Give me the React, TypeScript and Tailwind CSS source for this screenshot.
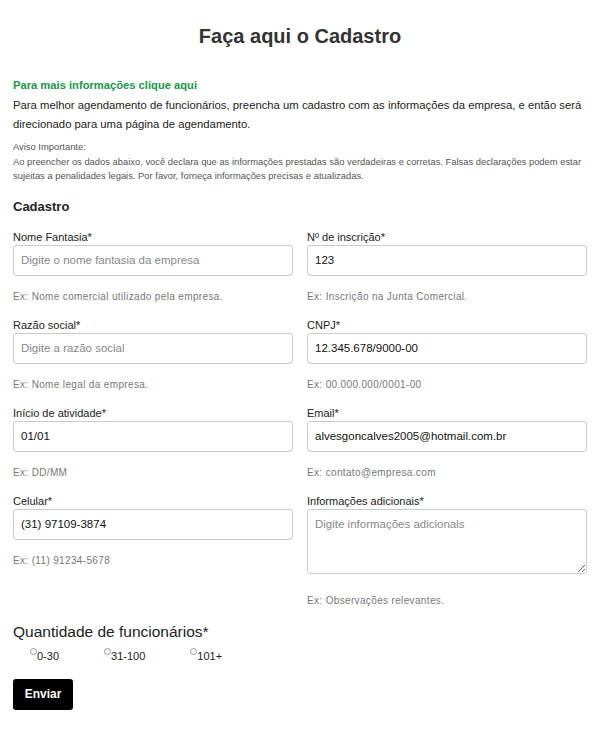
import React, { useState } from 'react';

type Field = {
  id: string;
  label: string;
  placeholder?: string;
  value?: string;
  hint: string;
  multiline?: boolean;
};

const fields: Field[] = [
  { id: 'fantasia', label: 'Nome Fantasia*', placeholder: 'Digite o nome fantasia da empresa', hint: 'Ex: Nome comercial utilizado pela empresa.' },
  { id: 'inscricao', label: 'Nº de inscrição*', value: '123', hint: 'Ex: Inscrição na Junta Comercial.' },
  { id: 'razao', label: 'Razão social*', placeholder: 'Digite a razão social', hint: 'Ex: Nome legal da empresa.' },
  { id: 'cnpj', label: 'CNPJ*', value: '12.345.678/9000-00', hint: 'Ex: 00.000.000/0001-00' },
  { id: 'inicio', label: 'Início de atividade*', value: '01/01', hint: 'Ex: DD/MM' },
  { id: 'email', label: 'Email*', value: 'alvesgoncalves2005@hotmail.com.br', hint: 'Ex: contato@empresa.com' },
  { id: 'celular', label: 'Celular*', value: '(31) 97109-3874', hint: 'Ex: (11) 91234-5678' },
  { id: 'info', label: 'Informações adicionais*', placeholder: 'Digite informações adicionais', hint: 'Ex: Observações relevantes.', multiline: true },
];

const quantidades = ['0-30', '31-100', '101+'];

const App: React.FC = () => {
  const [values, setValues] = useState<Record<string, string>>(() => {
    const init: Record<string, string> = {};
    fields.forEach((f) => (init[f.id] = f.value ?? ''));
    return init;
  });
  const [quantidade, setQuantidade] = useState('');

  const inputClass =
    'block w-full border border-[#cccccc] rounded-[3px] px-[7px] text-[11.5px] text-[#111] placeholder-[#888] bg-white focus:outline-none';

  return (
    <div className="min-h-screen bg-white font-['Liberation_Sans',Arial,sans-serif] text-[#222]">
      <div className="px-[13px] pt-[24px] pb-6">
        <h1 className="text-center text-[20px] leading-[24px] font-bold text-[#333]">
          Faça aqui o Cadastro
        </h1>

        <a href="#" className="block mt-[29px] text-[11.2px] leading-[16px] font-bold text-[#17964a]">
          Para mais informações clique aqui
        </a>

        <p className="mt-[3px] text-[11.3px] leading-[19px] text-[#222]">
          Para melhor agendamento de funcionários, preencha um cadastro com as informações da empresa, e então será
          direcionado para uma página de agendamento.
        </p>

        <div className="mt-[6px] text-[9.4px] leading-[14.5px] text-[#555]">
          <p>Aviso Importante:</p>
          <p>
            Ao preencher os dados abaixo, você declara que as informações prestadas são verdadeiras e corretas. Falsas
            declarações podem estar sujeitas a penalidades legais. Por favor, forneça informações precisas e atualizadas.
          </p>
        </div>

        <h2 className="mt-[14px] text-[13px] leading-[18px] font-bold text-[#222]">Cadastro</h2>

        <form className="mt-[14px]" onSubmit={(e) => e.preventDefault()}>
          <div className="grid grid-cols-2 gap-x-[14px] gap-y-[15px] items-start">
            {fields.map((f) => (
              <div key={f.id}>
                <label htmlFor={f.id} className="block text-[11px] leading-[14px] text-[#222] mb-[1px]">
                  {f.label}
                </label>
                {f.multiline ? (
                  <textarea
                    id={f.id}
                    placeholder={f.placeholder}
                    value={values[f.id]}
                    onChange={(e) => setValues({ ...values, [f.id]: e.target.value })}
                    className={`${inputClass} h-[65px] pt-[6px] resize-y`}
                  />
                ) : (
                  <input
                    id={f.id}
                    type="text"
                    placeholder={f.placeholder}
                    value={values[f.id]}
                    onChange={(e) => setValues({ ...values, [f.id]: e.target.value })}
                    className={`${inputClass} h-[31px]`}
                  />
                )}
                <p
                  className={`${
                    f.multiline ? 'mt-[20px]' : 'mt-[14px]'
                  } text-[10px] leading-[13px] tracking-[0.35px] text-[#777]`}
                >
                  {f.hint}
                </p>
              </div>
            ))}
          </div>

          <p className="mt-[15px] text-[15.5px] leading-[20px] text-[#222]">Quantidade de funcionários*</p>

          <div className="flex mt-[5px] pl-[17px] gap-[45px]">
            {quantidades.map((q) => (
              <label key={q} className="flex items-start cursor-pointer" onClick={() => setQuantidade(q)}>
                <span
                  className={`mt-[1px] w-[7px] h-[7px] rounded-full border ${
                    quantidade === q ? 'border-[#333] bg-[#333]' : 'border-[#999] bg-white'
                  }`}
                />
                <span className="mt-[3px] text-[11px] leading-[13px] text-[#222]">{q}</span>
              </label>
            ))}
          </div>

          <button
            type="submit"
            className="mt-[16px] w-[60px] h-[31px] rounded-[3px] bg-black text-white text-[12px] font-bold"
          >
            Enviar
          </button>
        </form>
      </div>
    </div>
  );
};

export default App;
